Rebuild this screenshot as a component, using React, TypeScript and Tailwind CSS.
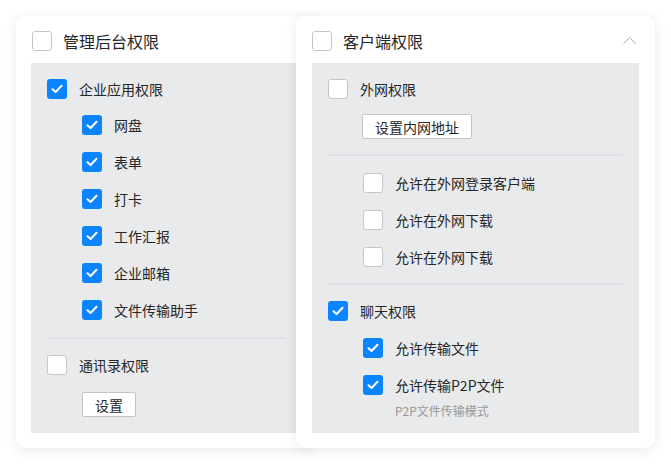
import React from "react";

const FONT = '"Noto Sans CJK SC", "Noto Sans", sans-serif';

function Box({ checked }: { checked?: boolean }) {
  if (checked) {
    return (
      <span className="flex h-[20px] w-[20px] shrink-0 items-center justify-center rounded-[3px] bg-[#0a84ff]">
        <svg width="12" height="10" viewBox="0 0 12 10" fill="none">
          <path d="M1.5 5.2 L4.6 8 L10.5 1.8" stroke="#fff" strokeWidth="2" strokeLinecap="round" strokeLinejoin="round" />
        </svg>
      </span>
    );
  }
  return <span className="h-[20px] w-[20px] shrink-0 rounded-[3px] border border-[#c6c6c6] bg-white" />;
}

function Row({ checked, label, className = "" }: { checked?: boolean; label: string; className?: string }) {
  return (
    <div className={`flex h-[20px] items-center ${className}`}>
      <Box checked={checked} />
      <span className="ml-[12px] text-[14px] leading-[20px] text-[#262626]">{label}</span>
    </div>
  );
}

function Btn({ label, className = "" }: { label: string; className?: string }) {
  return (
    <div className={`flex h-[25px] w-fit items-center rounded-[2px] border border-[#c4c4c4] bg-white px-[12px] text-[14px] leading-[20px] text-[#262626] ${className}`}>
      {label}
    </div>
  );
}

function Divider({ className = "" }: { className?: string }) {
  return <div className={`h-[2px] bg-[#dfe0e3] ${className}`} />;
}

export default function App() {
  return (
    <div className="h-[465px] w-[671px] bg-white" style={{ fontFamily: FONT }}>
      <div className="flex pl-[16px] pt-[16px]">
        {/* Left card */}
        <div className="flex h-[432px] w-[300px] shrink-0 flex-col rounded-[10px] bg-white px-[15px] pb-[15px] shadow-[0_2px_14px_rgba(0,0,0,0.09)]">
          <div className="flex h-[47px] shrink-0 items-center pt-[3px] pl-[1px]">
            <Box />
            <span className="ml-[11px] text-[16px] leading-[22px] text-[#262626]">管理后台权限</span>
          </div>
          <div className="flex flex-1 flex-col bg-[#e9eaec] px-[16px] pt-[16px]">
            <Row checked label="企业应用权限" />
            <div className="pl-[35px]">
              <Row checked label="网盘" className="mt-[16px]" />
              <Row checked label="表单" className="mt-[17px]" />
              <Row checked label="打卡" className="mt-[17px]" />
              <Row checked label="工作汇报" className="mt-[17px]" />
              <Row checked label="企业邮箱" className="mt-[17px]" />
              <Row checked label="文件传输助手" className="mt-[17px]" />
            </div>
            <Divider className="mt-[17px]" />
            <Row label="通讯录权限" className="mt-[16px]" />
            <div className="pl-[35px]">
              <Btn label="设置" className="mt-[17px]" />
            </div>
          </div>
        </div>

        {/* Right card */}
        <div className="relative z-10 ml-[-20px] flex h-[432px] w-[359px] shrink-0 flex-col rounded-[10px] bg-white px-[16px] pb-[15px] shadow-[0_2px_14px_rgba(0,0,0,0.09)]">
          <div className="flex h-[47px] shrink-0 items-center pt-[3px]">
            <Box />
            <span className="ml-[11px] text-[16px] leading-[22px] text-[#262626]">客户端权限</span>
            <svg className="ml-auto mr-[3px] mb-[2px]" width="13" height="7" viewBox="0 0 13 7" fill="none">
              <path d="M0.5 6.5 L6.5 0.7 L12.5 6.5" stroke="#a8a8a8" strokeWidth="1" />
            </svg>
          </div>
          <div className="flex flex-1 flex-col bg-[#e9eaec] px-[16px] pt-[16px]">
            <Row label="外网权限" />
            <div className="pl-[34px]">
              <Btn label="设置内网地址" className="mt-[15px]" />
            </div>
            <Divider className="mt-[15px]" />
            <div className="pl-[35px]">
              <Row label="允许在外网登录客户端" className="mt-[17px]" />
              <Row label="允许在外网下载" className="mt-[17px]" />
              <Row label="允许在外网下载" className="mt-[17px]" />
            </div>
            <Divider className="mt-[16px]" />
            <Row checked label="聊天权限" className="mt-[16px]" />
            <div className="pl-[35px]">
              <Row checked label="允许传输文件" className="mt-[17px]" />
              <Row checked label="允许传输P2P文件" className="mt-[17px]" />
              <div className="mt-[8px] pl-[32px] text-[12px] leading-[16px] text-[#999]">P2P文件传输模式</div>
            </div>
          </div>
        </div>
      </div>
    </div>
  );
}
